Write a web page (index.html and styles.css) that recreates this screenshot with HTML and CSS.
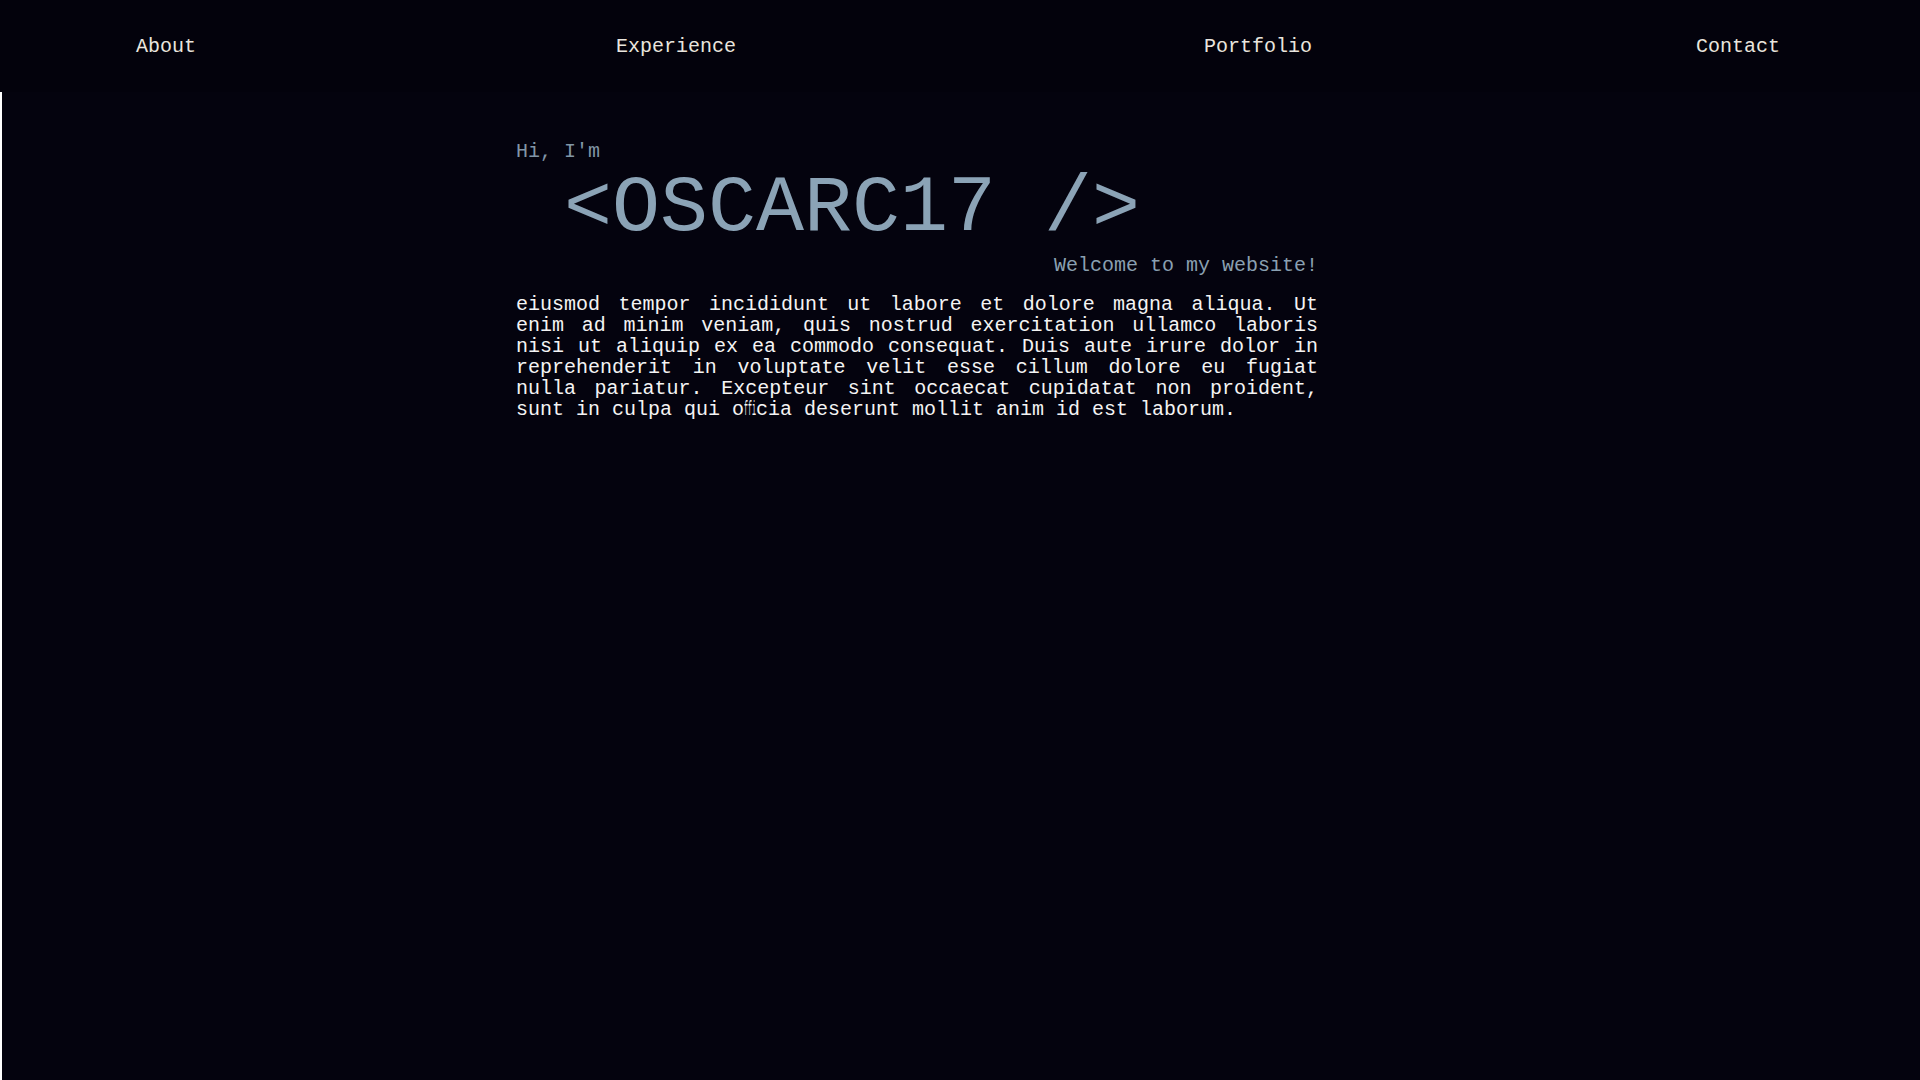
FILE: index.html
```html
<!DOCTYPE html>
<html lang="en">
<head>
<meta charset="utf-8">
<title>OSCARC17</title>
<link rel="stylesheet" href="styles.css">
</head>
<body>
<header class="header">
  <nav class="nav">
    <a class="nav-link nav-about" href="#about">About</a>
    <a class="nav-link nav-experience" href="#experience">Experience</a>
    <a class="nav-link nav-portfolio" href="#portfolio">Portfolio</a>
    <a class="nav-link nav-contact" href="#contact">Contact</a>
  </nav>
</header>
<main class="main">
  <section class="intro">
    <p class="greeting">Hi, I'm</p>
    <h1 class="title">&lt;OSCARC17 /&gt;</h1>
    <p class="welcome">Welcome to my website!</p>
    <p class="bio">eiusmod tempor incididunt ut labore et dolore magna aliqua. Ut enim ad minim veniam, quis nostrud exercitation ullamco laboris nisi ut aliquip ex ea commodo consequat. Duis aute irure dolor in reprehenderit in voluptate velit esse cillum dolore eu fugiat nulla pariatur. Excepteur sint occaecat cupidatat non proident, sunt in culpa qui o<span class="lig"><span class="lig-inner">ffi</span></span>cia deserunt mollit anim id est laborum.</p>
  </section>
</main>
</body>
</html>
```

FILE: styles.css
```css
html, body {
  margin: 0;
  padding: 0;
  background: #04030e;
}

body {
  font-family: "Courier New", "Nimbus Mono PS", "Nimbus Mono L", "FreeMono", "Liberation Mono", monospace;
  font-size: 20px;
  color: #f2f2f2;
  min-height: 100vh;
}

.header {
  background: #03020c;
}

.nav {
  display: flex;
  align-items: center;
  height: 92px;
  padding-left: 136px;
}

.nav-link {
  color: #e9e5de;
  text-decoration: none;
  font-size: 20px;
  line-height: normal;
}

.nav-experience { margin-left: 420px; }
.nav-portfolio { margin-left: 468px; }
.nav-contact { margin-left: 384px; }

.main {
  border-left: 2px solid #ffffff;
  min-height: calc(100vh - 92px);
  box-sizing: border-box;
  padding-top: 48px;
  padding-left: 514px;
}

.intro {
  width: 802px;
}

.greeting {
  margin: 0;
  font-size: 20px;
  line-height: normal;
  color: #8196a6;
}

.title {
  margin: 0;
  padding-left: 48px;
  font-size: 80px;
  font-weight: normal;
  line-height: normal;
  color: #8ba3b6;
}

.welcome {
  margin: 0;
  text-align: right;
  font-size: 20px;
  line-height: normal;
  color: #8aa0b1;
}

.bio {
  margin: 17px 0 0;
  font-size: 20px;
  line-height: 21px;
  text-align: justify;
  color: #f4f4f4;
}

.lig {
  display: inline-block;
  width: 12px;
  white-space: nowrap;
}

.lig-inner {
  display: inline-block;
  transform: scaleX(0.3333);
  transform-origin: 0 50%;
}
```
